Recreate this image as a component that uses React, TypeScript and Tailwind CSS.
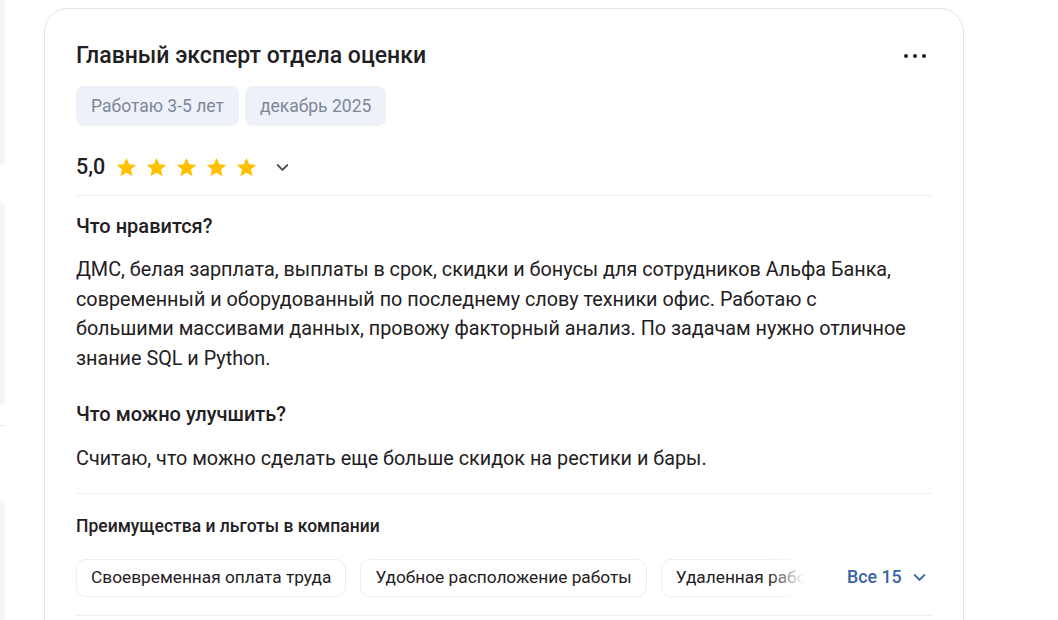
import { ChevronDown } from 'lucide-react';

const benefits = ['Своевременная оплата труда', 'Удобное расположение работы', 'Удаленная работа'];

function Star() {
  return (
    <svg width="21" height="21" viewBox="0 0 24 24" aria-hidden="true">
      <path
        fill="#ffc000"
        d="M12 1.2l3.2 7.2 7.9.7-6 5.2 1.8 7.8L12 18l-6.9 4.1 1.8-7.8-6-5.2 7.9-.7z"
      />
    </svg>
  );
}

function SideStrip() {
  return (
    <div className="flex w-[5px] shrink-0 flex-col">
      <div className="h-[165px] shrink-0 rounded-br-[10px] bg-[#f4f5fb]" />
      <div className="mt-[36px] h-[204px] shrink-0 rounded-r-[10px] bg-[#f4f5fb]" />
      <div className="mt-[20px] h-px shrink-0 bg-[#e3e5ea]" />
      <div className="mt-[74px] h-[200px] shrink-0 rounded-tr-[10px] bg-[#f4f5fb]" />
    </div>
  );
}

export default function App() {
  return (
    <div
      className="flex h-[620px] w-[1058px] overflow-hidden bg-white text-[#1f2023]"
      style={{ fontFamily: 'Roboto, "Noto Sans", sans-serif' }}
    >
      <SideStrip />

      {/* Review card */}
      <div className="ml-[39px] mt-[8px] h-[700px] w-[920px] shrink-0 rounded-[24px] border border-[#dfe3ec] px-[31px] pt-[33px]">
        <div className="flex items-center justify-between">
          <h2 className="text-[23px] leading-[28px] font-medium">Главный эксперт отдела оценки</h2>
          <div className="mr-[6px] flex gap-[4.5px]">
            <span className="h-[4.5px] w-[4.5px] rounded-full bg-[#1e2230]" />
            <span className="h-[4.5px] w-[4.5px] rounded-full bg-[#1e2230]" />
            <span className="h-[4.5px] w-[4.5px] rounded-full bg-[#1e2230]" />
          </div>
        </div>

        <div className="mt-[16px] flex gap-[6px]">
          <span className="flex h-[40px] items-center rounded-[8px] bg-[#eef1f8] px-[15px] text-[17.5px] text-[#7d8799]">
            Работаю 3-5 лет
          </span>
          <span className="flex h-[40px] items-center rounded-[8px] bg-[#eef1f8] px-[15px] text-[17.5px] text-[#7d8799]">
            декабрь 2025
          </span>
        </div>

        <div className="mt-[27px] flex h-[28px] items-center">
          <span className="text-[21.5px] font-medium">5,0</span>
          <div className="ml-[11px] flex gap-[9px]">
            <Star />
            <Star />
            <Star />
            <Star />
            <Star />
          </div>
          <ChevronDown className="ml-[16px] h-[19px] w-[19px] text-[#4a4d55]" strokeWidth={2.5} />
        </div>

        <div className="mt-[14px] h-px bg-[#eef0f3]" />

        <h3 className="mt-[16px] text-[20px] leading-[28px] font-medium">Что нравится?</h3>
        <p className="mt-[15px] text-[19.8px] leading-[29.7px]">
          ДМС, белая зарплата, выплаты в срок, скидки и бонусы для сотрудников Альфа Банка, современный и
          оборудованный по последнему слову техники офис. Работаю с<br />
          большими массивами данных, провожу факторный анализ. По задачам нужно отличное знание SQL и Python.
        </p>

        <h3 className="mt-[26px] text-[20px] leading-[28px] font-medium">Что можно улучшить?</h3>
        <p className="mt-[16px] text-[19.8px] leading-[30px]">Считаю, что можно сделать еще больше скидок на рестики и бары.</p>

        <div className="mt-[19px] h-px bg-[#eef0f3]" />

        <h4 className="mt-[20px] text-[17.5px] leading-[24px] font-medium">Преимущества и льготы в компании</h4>

        <div className="mt-[21px] flex items-center">
          <div className="relative flex w-[728px] shrink-0 gap-[14px] overflow-hidden">
            {benefits.map((b) => (
              <span
                key={b}
                className="flex h-[38px] shrink-0 items-center rounded-[10px] border border-[#eceef3] px-[14px] text-[17.3px] whitespace-nowrap"
              >
                {b}
              </span>
            ))}
            <div className="absolute top-0 right-0 h-full w-[36px] bg-gradient-to-r from-white/0 to-white" />
          </div>
          <button className="ml-[43px] flex items-center gap-[8px] text-[17.8px] font-medium text-[#3a64a8]">
            Все 15
            <ChevronDown className="h-[19px] w-[19px]" strokeWidth={2.5} />
          </button>
        </div>

        <div className="mt-[18px] h-px bg-[#eef0f3]" />
      </div>
    </div>
  );
}
